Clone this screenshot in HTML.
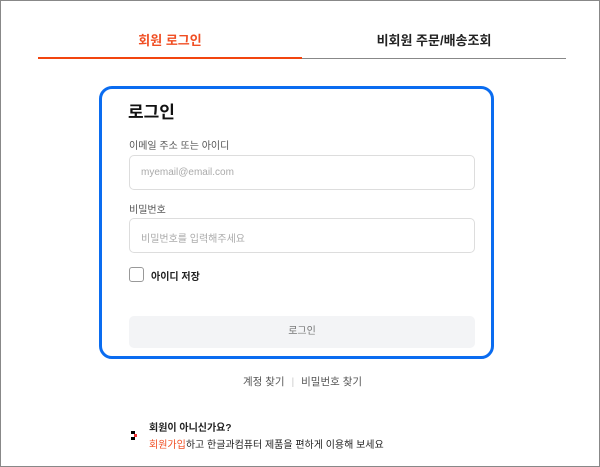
<!DOCTYPE html>
<html><head><meta charset="utf-8"><style>
*{margin:0;padding:0;box-sizing:border-box}
body{width:600px;height:467px;background:#fff;font-family:"Liberation Sans","Noto Sans CJK KR",sans-serif;position:relative;overflow:hidden}
.a{position:absolute}
.tab{top:30px;font-size:13px;font-weight:bold;text-align:center;width:264px}
.box{left:99px;top:86px;width:395px;height:273px;border:3px solid #0a6cf0;border-radius:13px}
.lbl{font-size:10px;color:#555;left:129px}
.inp{left:129px;width:346px;height:35px;border:1px solid #ddd;border-radius:5px;font-size:10px;color:#aaa;padding:11px 0 0 11px}
</style></head><body>
<div class="a" style="left:0;top:0;width:600px;height:467px;border:1px solid #888"></div>
<div class="a tab" style="left:38px;color:#f04e23">회원 로그인</div>
<div class="a tab" style="left:302px;color:#222">비회원 주문/배송조회</div>
<div class="a" style="left:38px;top:57px;width:264px;height:2px;background:#f2450f"></div>
<div class="a" style="left:302px;top:58px;width:264px;height:1px;background:#888"></div>
<div class="a box"></div>
<div class="a" style="left:128px;top:98px;font-size:17px;font-weight:bold;color:#111">로그인</div>
<div class="a lbl" style="top:137px">이메일 주소 또는 아이디</div>
<div class="a inp" style="top:155px">myemail@email.com</div>
<div class="a lbl" style="top:201px">비밀번호</div>
<div class="a inp" style="top:218px">비밀번호를 입력해주세요</div>
<div class="a" style="left:129px;top:267px;width:15px;height:15px;border:1px solid #999;border-radius:3px"></div>
<div class="a" style="left:151px;top:268px;font-size:10px;font-weight:bold;color:#222">아이디 저장</div>
<div class="a" style="left:129px;top:316px;width:346px;height:32px;background:#f3f4f6;border-radius:5px;font-size:10px;color:#777;text-align:center;line-height:32px">로그인</div>
<div class="a" style="left:243px;top:374px;font-size:10.5px;color:#555">계정 찾기 <span style="color:#ccc;margin:0 4px">|</span> 비밀번호 찾기</div>
<div class="a" style="left:131px;top:431px;width:4px;height:3px;background:#000"></div>
<div class="a" style="left:134px;top:434px;width:3px;height:3px;background:#e33"></div>
<div class="a" style="left:131px;top:437px;width:4px;height:3px;background:#000"></div>
<div class="a" style="left:149px;top:419px;font-size:10px;font-weight:bold;color:#222">회원이 아니신가요?</div>
<div class="a" style="left:149px;top:436px;font-size:10px;color:#222"><span style="color:#f04e23">회원가입</span>하고 한글과컴퓨터 제품을 편하게 이용해 보세요</div>
</body></html>
